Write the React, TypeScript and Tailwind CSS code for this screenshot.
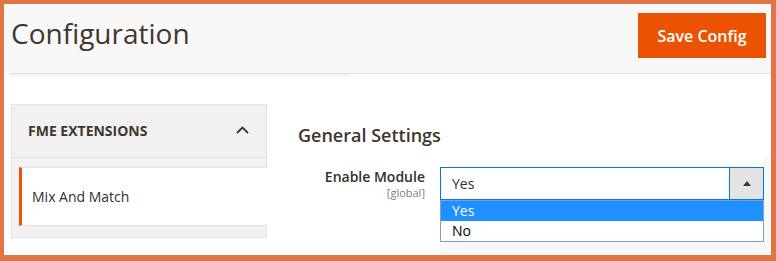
import React from "react";

export default function App() {
  return (
    <div className="relative w-[776px] h-[261px] box-border overflow-hidden bg-white border-solid border-[#e07545] border-t-4 border-l-4 border-r-[5px] border-b-[6px] font-['Open_Sans',sans-serif]">
      {/* Header */}
      <div className="bg-[#f8f8f8] flex flex-col">
        <div className="h-[69px] flex justify-between items-start pl-[7px] pr-[5px]">
          <h1 className="mt-[12px] text-[28px] leading-[34px] font-normal text-[#41362f]">
            Configuration
          </h1>
          <button className="mt-[9px] h-[45px] w-[128px] bg-[#eb5202] text-white text-[16px] font-semibold leading-[20px] flex items-center justify-center">
            Save Config
          </button>
        </div>
        <div className="ml-[7px] h-px bg-[#e0e0e0]" />
      </div>
      <div className="ml-[4px] w-[342px] h-[2px] bg-[#f4f4f4]" />

      {/* Body */}
      <div className="flex">
        {/* Sidebar */}
        <div className="ml-[7px] mt-[28px] w-[256px] h-[134px] box-border border border-[#e3e3e3] bg-[#f1f1f1] flex flex-col">
          <div className="h-[53px] box-border border-b border-[#e3e3e3] flex items-center justify-between pl-[16px] pr-[17px]">
            <span className="text-[14px] leading-[20px] font-bold text-[#41362f]">
              FME EXTENSIONS
            </span>
            <svg width="13" height="8" viewBox="0 0 13 8" className="mt-[-2px]">
              <path d="M1 7 L6.5 1.5 L12 7" fill="none" stroke="#41362f" strokeWidth="1.8" />
            </svg>
          </div>
          <div className="pt-[9px]">
            <div className="ml-[7px] mr-[-1px] h-[59px] box-border bg-white border-y border-[#e3e3e3] border-l-[3px] border-l-[#eb5202] flex items-center pl-[10px]">
              <span className="text-[14px] leading-[20px] text-[#303030]">Mix And Match</span>
            </div>
          </div>
        </div>

        {/* Main */}
        <div className="ml-[31px] pt-[47px] flex flex-col">
          <h2 className="text-[18px] leading-[24px] font-semibold text-[#41362f]">
            General Settings
          </h2>
          <div className="mt-[20px] flex">
            <div className="w-[127px] flex flex-col items-end">
              <span className="text-[14px] leading-[20px] font-semibold text-[#303030]">
                Enable Module
              </span>
              <span className="text-[11px] leading-[11px] text-[#808080]">[global]</span>
            </div>
            <div className="relative ml-[15px]">
              {/* gray backdrop */}
              <div className="absolute left-[324px] top-[-10px] w-[5px] h-[84px] bg-[#f8f8f8]" />
              <div className="absolute left-[-1px] top-[74px] w-[330px] h-[14px] bg-[#f8f8f8]" />
              {/* select */}
              <div className="relative w-[324px] h-[33px] box-border border border-[#007bdb] bg-white flex">
                <div className="flex-1 flex items-center pl-[11px] text-[14px] leading-[20px] text-[#303030]">
                  Yes
                </div>
                <div className="w-[34px] h-full bg-[#e3e3e3] border-l border-[#007bdb] flex items-center justify-center">
                  <svg width="8" height="5" viewBox="0 0 8 5">
                    <polygon points="0,5 4,0 8,5" fill="#41362f" />
                  </svg>
                </div>
              </div>
              {/* dropdown list */}
              <div className="absolute left-0 top-[33px] w-[324px] box-border border border-[#7f9ed8] bg-white">
                <div className="h-[20px] bg-[#1e90ff] text-white pl-[11px] text-[14px] leading-[19px]">Yes</div>
                <div className="h-[20px] bg-white text-[#000000] pl-[11px] text-[14px] leading-[19px]">No</div>
              </div>
            </div>
          </div>
        </div>
      </div>
    </div>
  );
}
